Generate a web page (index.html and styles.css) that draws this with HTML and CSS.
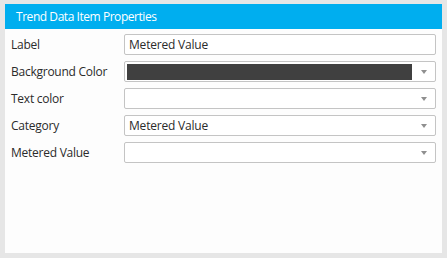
FILE: index.html
```html
<!DOCTYPE html>
<html lang="en">
<head>
	<meta charset="UTF-8">
	<title>Trend Data Item Properties</title>
	<link rel="stylesheet" href="styles.css">
</head>
<body>
	<div class="panel">
		<div class="panel-head">Trend Data Item Properties</div>
		<div class="panel-body">
			<div class="row">
				<label class="lbl">Label</label>
				<div class="field">Metered Value</div>
			</div>
			<div class="row">
				<label class="lbl">Background Color</label>
				<div class="field combo"><span class="swatch"></span><span class="arrow"></span></div>
			</div>
			<div class="row">
				<label class="lbl">Text color</label>
				<div class="field combo"><span class="val"></span><span class="arrow"></span></div>
			</div>
			<div class="row">
				<label class="lbl">Category</label>
				<div class="field combo"><span class="val">Metered Value</span><span class="arrow"></span></div>
			</div>
			<div class="row">
				<label class="lbl">Metered Value</label>
				<div class="field combo"><span class="val"></span><span class="arrow"></span></div>
			</div>
		</div>
	</div>
</body>
</html>
```

FILE: styles.css
```css
*{padding:0; margin:0; box-sizing:border-box;}
html,body{height:100%;}
body{background:#e6e6e6; font-family:"Open Sans","Noto Sans",sans-serif; font-size:12px; color:#2b2b2b; padding:4px 5px 5px 5px;}
.panel{height:249px; background:#fdfdfd; display:flex; flex-direction:column;}
.panel-head{height:25px; background:#00aeef; color:#fff; font-size:12px; line-height:25px; padding-left:11px; letter-spacing:-0.45px;}
.panel-body{padding:5px 6px 0 6px; display:flex; flex-direction:column; gap:6px;}
.row{display:flex; align-items:center; height:21px;}
.lbl{width:113px; flex:none; letter-spacing:-0.25px;}
.field{flex:1; height:21px; border:1px solid #c4c4c4; border-radius:2px; background:#fff; line-height:19px; padding-left:4px; display:flex; align-items:center; letter-spacing:-0.2px;}
.combo{padding-right:0;}
.val{flex:1;}
.swatch{flex:1; height:16px; background:#404040; margin-left:-2px;}
.arrow{width:23px; flex:none; height:19px; position:relative;}
.arrow:after{content:""; position:absolute; left:9px; top:8px; border-left:3.5px solid transparent; border-right:3.5px solid transparent; border-top:4px solid #8f8f8f;}
```
